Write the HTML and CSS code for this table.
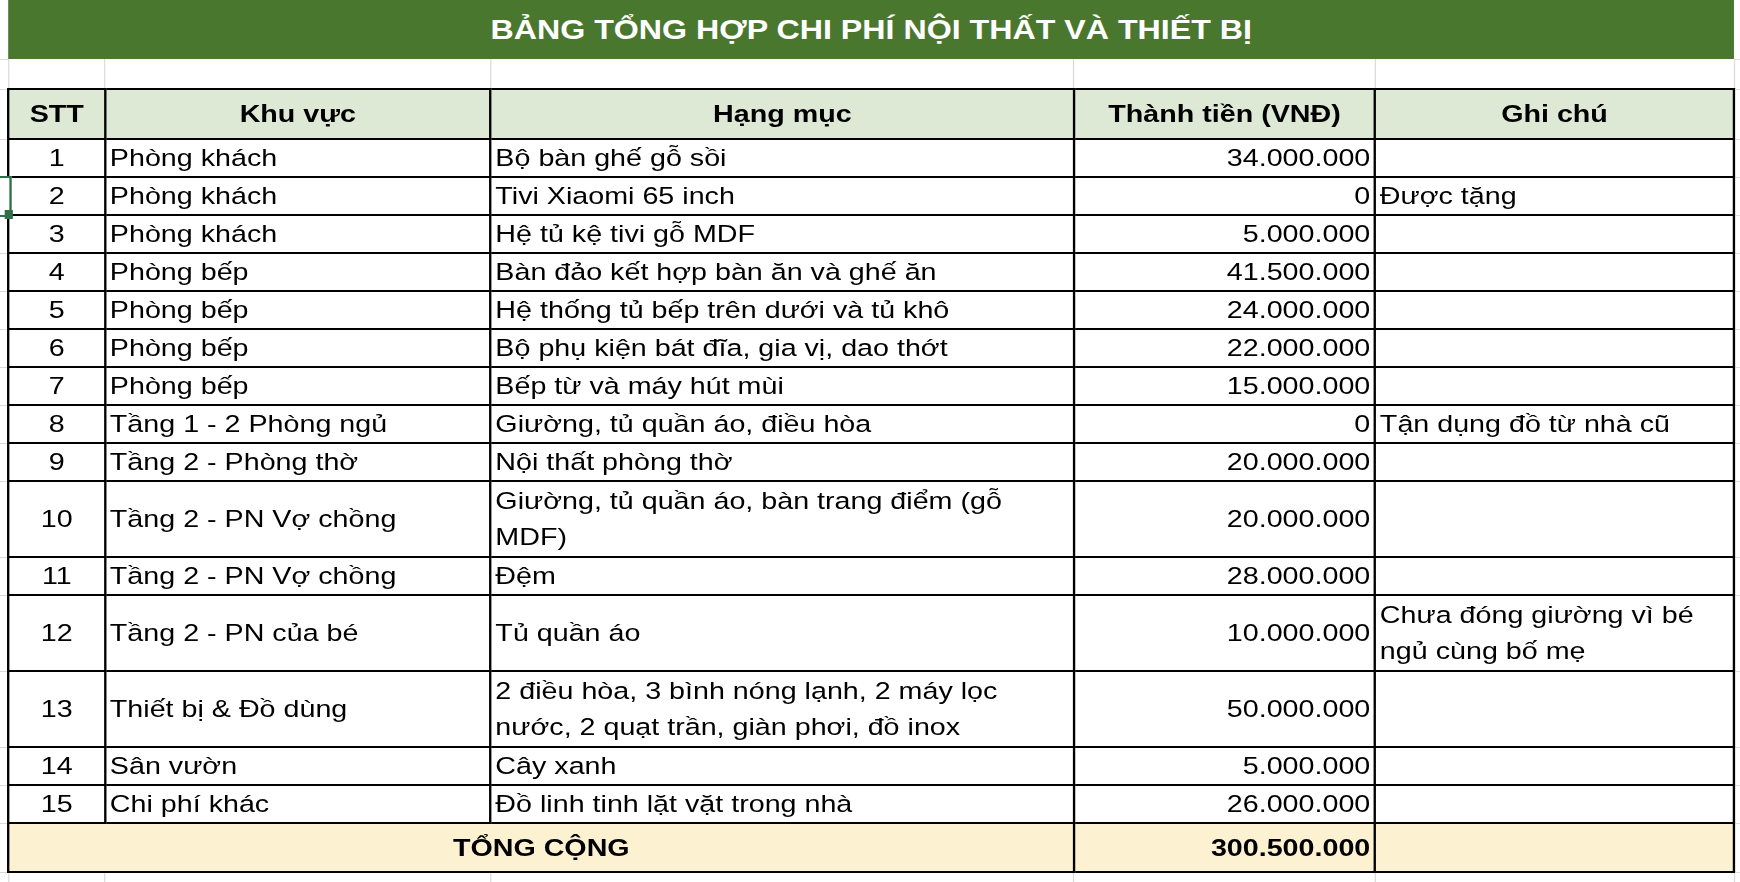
FILE: index.html
```html
<!DOCTYPE html>
<html lang="vi">
<head>
<meta charset="utf-8">
<title>Bảng tổng hợp chi phí nội thất và thiết bị</title>
<link rel="stylesheet" href="styles.css">
</head>
<body>
<div class="sheet">
  <table class="grid">
    <colgroup>
      <col class="c-a"><col class="c-stt"><col class="c-area"><col class="c-item"><col class="c-cost"><col class="c-note"><col class="c-g">
    </colgroup>
    <tbody>
      <tr class="r-title">
        <td class="gl gl-title"></td>
        <td class="title" colspan="5">BẢNG TỔNG HỢP CHI PHÍ NỘI THẤT VÀ THIẾT BỊ</td>
        <td class="gl gl-title gl-right"></td>
      </tr>
      <tr class="r-blank">
        <td class="gl"></td><td class="blank"></td><td class="blank"></td><td class="blank"></td><td class="blank"></td><td class="blank"></td><td class="gl gl-right"></td>
      </tr>
      <tr class="r-head">
        <td class="gl"></td>
        <th class="hd">STT</th>
        <th class="hd">Khu vực</th>
        <th class="hd">Hạng mục</th>
        <th class="hd">Thành tiền (VNĐ)</th>
        <th class="hd">Ghi chú</th>
        <td class="gl gl-right"></td>
      </tr>
      <tr class="r-one">
        <td class="gl"></td><td class="d stt">1</td><td class="d">Phòng khách</td><td class="d">Bộ bàn ghế gỗ sồi</td><td class="d money">34.000.000</td><td class="d"></td><td class="gl gl-right"></td>
      </tr>
      <tr class="r-one">
        <td class="gl sel-cell"><span class="sel"></span></td><td class="d stt">2</td><td class="d">Phòng khách</td><td class="d">Tivi Xiaomi 65 inch</td><td class="d money">0</td><td class="d">Được tặng</td><td class="gl gl-right"></td>
      </tr>
      <tr class="r-one">
        <td class="gl"></td><td class="d stt">3</td><td class="d">Phòng khách</td><td class="d">Hệ tủ kệ tivi gỗ MDF</td><td class="d money">5.000.000</td><td class="d"></td><td class="gl gl-right"></td>
      </tr>
      <tr class="r-one">
        <td class="gl"></td><td class="d stt">4</td><td class="d">Phòng bếp</td><td class="d">Bàn đảo kết hợp bàn ăn và ghế ăn</td><td class="d money">41.500.000</td><td class="d"></td><td class="gl gl-right"></td>
      </tr>
      <tr class="r-one">
        <td class="gl"></td><td class="d stt">5</td><td class="d">Phòng bếp</td><td class="d">Hệ thống tủ bếp trên dưới và tủ khô</td><td class="d money">24.000.000</td><td class="d"></td><td class="gl gl-right"></td>
      </tr>
      <tr class="r-one">
        <td class="gl"></td><td class="d stt">6</td><td class="d">Phòng bếp</td><td class="d">Bộ phụ kiện bát đĩa, gia vị, dao thớt</td><td class="d money">22.000.000</td><td class="d"></td><td class="gl gl-right"></td>
      </tr>
      <tr class="r-one">
        <td class="gl"></td><td class="d stt">7</td><td class="d">Phòng bếp</td><td class="d">Bếp từ và máy hút mùi</td><td class="d money">15.000.000</td><td class="d"></td><td class="gl gl-right"></td>
      </tr>
      <tr class="r-one">
        <td class="gl"></td><td class="d stt">8</td><td class="d">Tầng 1 - 2 Phòng ngủ</td><td class="d">Giường, tủ quần áo, điều hòa</td><td class="d money">0</td><td class="d">Tận dụng đồ từ nhà cũ</td><td class="gl gl-right"></td>
      </tr>
      <tr class="r-one">
        <td class="gl"></td><td class="d stt">9</td><td class="d">Tầng 2 - Phòng thờ</td><td class="d">Nội thất phòng thờ</td><td class="d money">20.000.000</td><td class="d"></td><td class="gl gl-right"></td>
      </tr>
      <tr class="r-two">
        <td class="gl"></td><td class="d stt">10</td><td class="d">Tầng 2 - PN Vợ chồng</td><td class="d">Giường, tủ quần áo, bàn trang điểm (gỗ<br>MDF)</td><td class="d money">20.000.000</td><td class="d"></td><td class="gl gl-right"></td>
      </tr>
      <tr class="r-one">
        <td class="gl"></td><td class="d stt">11</td><td class="d">Tầng 2 - PN Vợ chồng</td><td class="d">Đệm</td><td class="d money">28.000.000</td><td class="d"></td><td class="gl gl-right"></td>
      </tr>
      <tr class="r-two">
        <td class="gl"></td><td class="d stt">12</td><td class="d">Tầng 2 - PN của bé</td><td class="d">Tủ quần áo</td><td class="d money">10.000.000</td><td class="d">Chưa đóng giường vì bé<br>ngủ cùng bố mẹ</td><td class="gl gl-right"></td>
      </tr>
      <tr class="r-two">
        <td class="gl"></td><td class="d stt">13</td><td class="d">Thiết bị &amp; Đồ dùng</td><td class="d">2 điều hòa, 3 bình nóng lạnh, 2 máy lọc<br>nước, 2 quạt trần, giàn phơi, đồ inox</td><td class="d money">50.000.000</td><td class="d"></td><td class="gl gl-right"></td>
      </tr>
      <tr class="r-one">
        <td class="gl"></td><td class="d stt">14</td><td class="d">Sân vườn</td><td class="d">Cây xanh</td><td class="d money">5.000.000</td><td class="d"></td><td class="gl gl-right"></td>
      </tr>
      <tr class="r-one">
        <td class="gl"></td><td class="d stt">15</td><td class="d">Chi phí khác</td><td class="d">Đồ linh tinh lặt vặt trong nhà</td><td class="d money">26.000.000</td><td class="d"></td><td class="gl gl-right"></td>
      </tr>
      <tr class="r-total">
        <td class="gl"></td>
        <td class="d total-label" colspan="3">TỔNG CỘNG</td>
        <td class="d total-sum money">300.500.000</td>
        <td class="d total-note"></td>
        <td class="gl gl-right"></td>
      </tr>
      <tr class="r-after">
        <td class="gl"></td><td class="after"></td><td class="after"></td><td class="after"></td><td class="after"></td><td class="after"></td><td class="gl gl-right"></td>
      </tr>
    </tbody>
  </table>
</div>
</body>
</html>
```

FILE: styles.css
```css
* {
  box-sizing: border-box;
}

html,
body {
  margin: 0;
  padding: 0;
  background: #ffffff;
  overflow: hidden;
}

body {
  width: 1740px;
  height: 882px;
  font-family: "Liberation Sans", Arial, Helvetica, sans-serif;
  color: #000000;
}

/* The sheet is laid out in narrow units and stretched to the window width,
   matching the widened rendering of the original spreadsheet capture. */
.sheet {
  width: 1487.3px;
  transform: scaleX(1.17);
  transform-origin: 0 0;
}

.grid {
  width: 1487.3px;
  border-collapse: collapse;
  table-layout: fixed;
}

.c-a { width: 7.3px; }
.c-stt { width: 82.5px; }
.c-area { width: 329.5px; }
.c-item { width: 498.7px; }
.c-cost { width: 257.3px; }
.c-note { width: 306.7px; }
.c-g { width: 5.3px; }

td,
th {
  padding: 0 3.1px;
  font-size: 24.5px;
  line-height: 36px;
  font-weight: 400;
  vertical-align: middle;
  white-space: nowrap;
  overflow: hidden;
  text-align: left;
}

/* row heights */
.r-title { height: 59px; }
.r-blank { height: 30px; }
.r-head { height: 50px; }
.r-one { height: 38px; }
.r-two { height: 76px; }
.r-total { height: 49px; }
.r-after { height: 12px; }

/* spreadsheet gridlines */
.gl {
  padding: 0;
  border-top: 1px solid #d9d9d9;
  border-bottom: 1px solid #d9d9d9;
  border-left: none;
  border-right: none;
}

.gl-title {
  border-top: none;
}

.blank {
  border-left: 1px solid #d9d9d9;
  border-right: 1px solid #d9d9d9;
  border-top: none;
  border-bottom: none;
}

.after {
  border-left: 1px solid #d9d9d9;
  border-right: 1px solid #d9d9d9;
  border-bottom: none;
}

.r-after .gl {
  border-bottom: none;
}

/* title bar */
.title {
  background: #4a772e;
  color: #ffffff;
  font-size: 27.5px;
  font-weight: 700;
  text-align: center;
  border: none;
  padding: 0;
}

/* header */
.hd {
  background: #dde8d5;
  font-weight: 700;
  text-align: center;
  border: 2px solid #000000;
}

/* data cells */
.d {
  border: 2px solid #000000;
}

.stt {
  text-align: center;
}

.money {
  text-align: right;
}

.total-label {
  background: #fcf1d0;
  font-weight: 700;
  text-align: center;
}

.total-sum {
  background: #fcf1d0;
  font-weight: 700;
}

.total-note {
  background: #fcf1d0;
}

/* active cell selection (column A, row of item 2) */
.sel-cell {
  position: relative;
  overflow: visible;
}

.sel {
  position: absolute;
  top: -2px;
  bottom: -2px;
  left: 0;
  width: 9.9px;
  background: #ffffff;
  border-top: 2px solid #2e7047;
  border-right: 2px solid #2e7047;
  border-bottom: 2px solid #2e7047;
}

.sel::after {
  content: "";
  position: absolute;
  right: -3.5px;
  bottom: -4px;
  width: 7.1px;
  height: 9px;
  background: #2e7047;
}
```
